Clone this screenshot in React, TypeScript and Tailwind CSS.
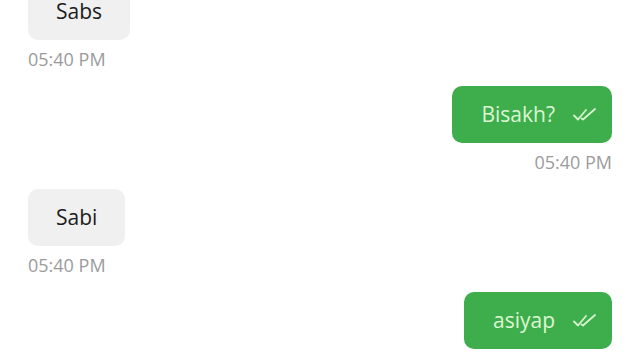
import React from "react";

type Msg = { id: number; text: string; time: string; mine: boolean };

const messages: Msg[] = [
  { id: 1, text: "Sabs", time: "05:40 PM", mine: false },
  { id: 2, text: "Bisakh?", time: "05:40 PM", mine: true },
  { id: 3, text: "Sabi", time: "05:40 PM", mine: false },
  { id: 4, text: "asiyap", time: "05:40 PM", mine: true },
];

function DoubleCheck() {
  return (
    <svg width="24" height="16" viewBox="0 0 24 16" fill="none" className="shrink-0">
      <path d="M1 8.5l4 4L13 3" stroke="#d6f3cd" strokeWidth="1.8" strokeLinecap="round" strokeLinejoin="round" />
      <path d="M8.5 11.5l1.5 1L22 2" stroke="#d6f3cd" strokeWidth="1.8" strokeLinecap="round" strokeLinejoin="round" />
    </svg>
  );
}

export default function App() {
  return (
    <div className="w-[640px] h-[360px] overflow-hidden bg-white font-['Open_Sans',sans-serif]">
      <div className="-mt-[17px] flex flex-col px-[28px]">
        {messages.map((m) => (
          <div key={m.id} className={`flex flex-col mb-[16px] ${m.mine ? "items-end" : "items-start"}`}>
            {m.mine ? (
              <div className="h-[57px] flex items-center gap-[18px] pl-[29px] pr-[15px] rounded-[10px] bg-[#3dae4b] text-[#def6d4] text-[21px] font-medium">
                <span>{m.text}</span>
                <DoubleCheck />
              </div>
            ) : (
              <div className="h-[57px] flex items-center px-[28px] rounded-[10px] bg-[#f0f0f0] text-[#1c1c1c] text-[21px] font-medium">
                {m.text}
              </div>
            )}
            <div className="mt-[8px] h-[22px] leading-[22px] text-[18px] text-[#9b9b9b]">{m.time}</div>
          </div>
        ))}
      </div>
    </div>
  );
}
